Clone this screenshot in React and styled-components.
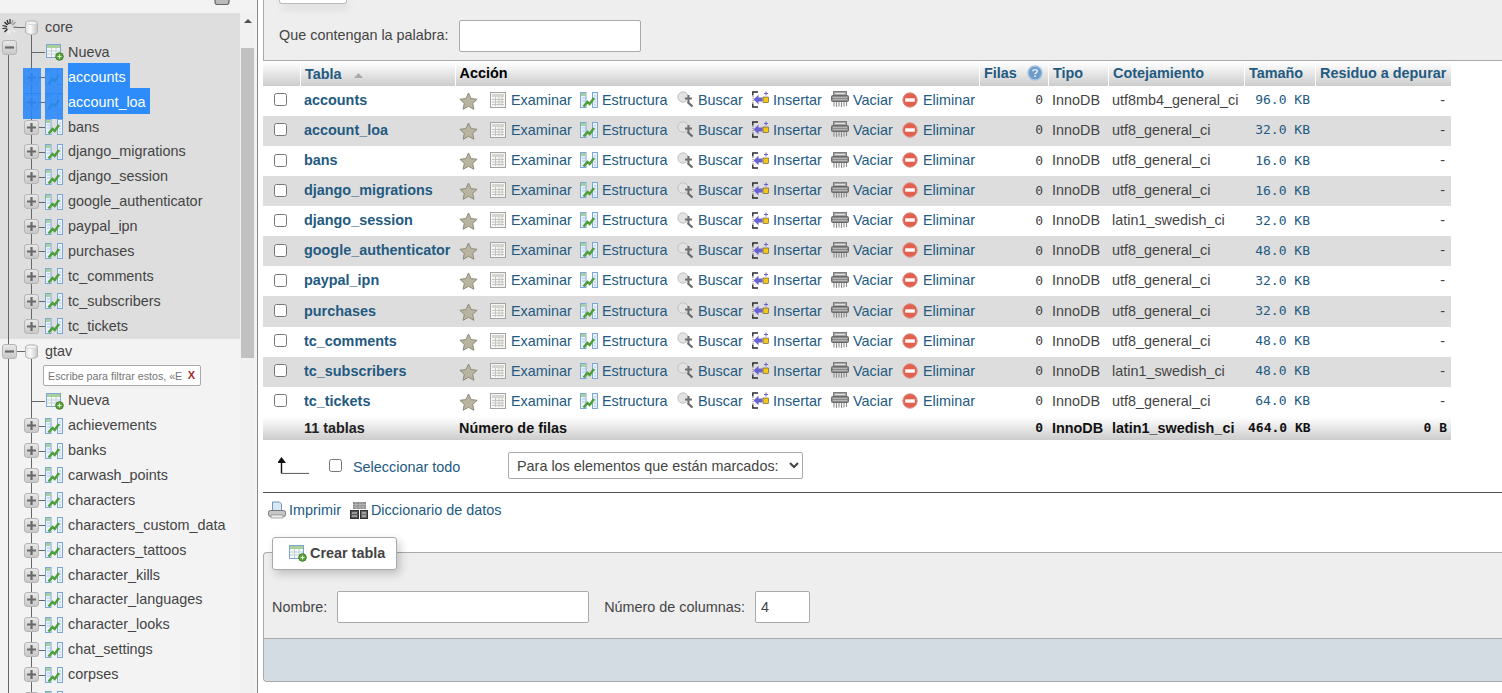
import React from 'react'
import styled, { createGlobalStyle } from 'styled-components'

const coreTables = ['accounts', 'account_loa', 'bans', 'django_migrations', 'django_session', 'google_authenticator', 'paypal_ipn', 'purchases', 'tc_comments', 'tc_subscribers', 'tc_tickets']
const gtavTables = ['achievements', 'banks', 'carwash_points', 'characters', 'characters_custom_data', 'characters_tattoos', 'character_kills', 'character_languages', 'character_looks', 'chat_settings', 'corpses', '']

const rows = [
  ['accounts', 'utf8mb4_general_ci', '96.0'],
  ['account_loa', 'utf8_general_ci', '32.0'],
  ['bans', 'utf8_general_ci', '16.0'],
  ['django_migrations', 'utf8_general_ci', '16.0'],
  ['django_session', 'latin1_swedish_ci', '32.0'],
  ['google_authenticator', 'utf8_general_ci', '48.0'],
  ['paypal_ipn', 'utf8_general_ci', '32.0'],
  ['purchases', 'utf8_general_ci', '32.0'],
  ['tc_comments', 'utf8_general_ci', '48.0'],
  ['tc_subscribers', 'latin1_swedish_ci', '48.0'],
  ['tc_tickets', 'utf8_general_ci', '64.0'],
]

const GlobalStyle = createGlobalStyle`
  html, body {
    margin: 0;
    height: 693px;
    overflow: hidden;
    background: #fff;
  }
  body {
    font-family: "Liberation Sans", Arial, sans-serif;
    font-size: 14.4px;
    color: #444;
  }
`

// icons
const StarIcon = () => (
  <svg width="19" height="18" viewBox="0 0 19 18">
    <path d="M9.5 1l2.6 5.6 6 .7-4.4 4.1 1.2 5.9-5.4-3-5.4 3 1.2-5.9L.9 7.3l6-.7z" fill="#b8b4a0" stroke="#8f8b78" strokeWidth="1" />
  </svg>
)

const BrowseIcon = () => (
  <svg width="16" height="16" viewBox="0 0 16 16">
    <rect x=".5" y=".5" width="15" height="15" fill="#f7f7f5" stroke="#a3a3a3" />
    <rect x="2" y="2" width="12" height="3" fill="#d5d5d0" />
    <path d="M2 7.5h12M2 10h12M2 12.5h12M5.5 5v9M9 5v9M12 5v9" stroke="#c4c4c0" strokeWidth="1" fill="none" />
  </svg>
)

const StructureIcon = () => (
  <svg width="18" height="18" viewBox="0 0 18 18">
    <rect x=".5" y="1.500" width="5.500" height="15" fill="#eaf2fb" stroke="#7ba6d8" />
    <rect x="12.500" y="1.500" width="5" height="15" fill="#eaf2fb" stroke="#7ba6d8" />
    <rect x="1" y="2" width="4.500" height="3" fill="#a7d19a" />
    <path d="M2 7h3M2 10h3M14 5h2M14 8h2M14 11h2M14 14h2" stroke="#a9c6e6" />
    <path d="M3.500 15.500L7.500 11l2.200 2L14 7" stroke="#4f9e3a" strokeWidth="2.500" fill="none" />
  </svg>
)

const SearchIcon = () => (
  <svg width="17" height="17" viewBox="0 0 17 17">
    <circle cx="6" cy="6" r="5.200" fill="#e2e2e2" stroke="#c2c2c2" />
    <path d="M10.500 11l5 4.500" stroke="#6a6a6a" strokeWidth="2.300" />
    <path d="M11.500 4v7M8 7.500h7" stroke="#6e6e6e" strokeWidth="2" />
  </svg>
)

const InsertIcon = () => (
  <svg width="17" height="17" viewBox="0 0 17 17">
    <path d="M6 1H.8v3.500M6 16H.8v-3.500" stroke="#2a2a2a" strokeWidth="1.400" fill="none" />
    <path d="M1 5v7" stroke="#777" strokeWidth="1" strokeDasharray="1 1" />
    <path d="M1.500 8.500L6.500 3.800v2.600h4v4.200h-4v2.600z" fill="#6a62d0" />
    <rect x="11" y="6" width="5.500" height="5.500" fill="#f5c518" stroke="#333" strokeWidth=".5" />
    <path d="M14 .5v4M12 2.500h4" stroke="#6a62d0" strokeWidth="1" />
  </svg>
)

const ShredderIcon = () => (
  <svg width="18" height="17" viewBox="0 0 18 17">
    <rect x="2.500" y=".5" width="13" height="4" fill="#a5a5a5" stroke="#7c7c7c" />
    <path d="M4 2.500h10" stroke="#e0e0e0" />
    <rect x=".5" y="4.500" width="17" height="6" rx="1" fill="#8a8a8a" stroke="#6a6a6a" />
    <path d="M2 6.500h14M2 8.500h14" stroke="#b5b5b5" />
    <path d="M3 11v4.500M5.500 11v5M8 11v4.500M10.500 11v5M13 11v4.500M15.500 11v4" stroke="#8c8c8c" strokeWidth="1.100" />
  </svg>
)

const DeleteIcon = () => (
  <svg width="16" height="16" viewBox="0 0 16 16">
    <circle cx="8" cy="8" r="7.200" fill="#e2604f" stroke="#d98f82" />
    <rect x="3.200" y="6.300" width="9.600" height="3.400" fill="#fff" />
  </svg>
)

const NewTableIcon = () => (
  <svg width="18" height="18" viewBox="0 0 18 18">
    <rect x=".5" y="1.500" width="14" height="13" fill="#f5f8f2" stroke="#7fa6cf" />
    <rect x="1" y="2" width="13" height="3" fill="#a9cf9a" />
    <path d="M1 8h13M1 11h13M5.500 5v9M10 5v9" stroke="#c2d2de" />
    <circle cx="13.500" cy="13.500" r="3.800" fill="#5ea33c" stroke="#3f7f2a" />
    <path d="M13.500 11.500v4M11.500 13.500h4" stroke="#dff0d2" />
  </svg>
)

const DbIcon = () => (
  <svg width="13" height="15" viewBox="0 0 13 15">
    <defs>
      <linearGradient id="dbFill" x1="0" x2="1" y1="0" y2="0">
        <stop offset="0" stopColor="#e0e0e0" />
        <stop offset=".4" stopColor="#fbfbfb" />
        <stop offset="1" stopColor="#c4c4c4" />
      </linearGradient>
    </defs>
    <path d="M.5 3c0-3 12-3 12 0v9c0 3.200-12 3.200-12 0z" fill="url(#dbFill)" stroke="#b5b5b5" />
    <ellipse cx="6.500" cy="3" rx="5.400" ry="1.600" fill="#f4f4f4" stroke="#c8c8c8" strokeWidth=".6" />
  </svg>
)

const Throbber = () => (
  <svg width="16" height="17" viewBox="0 0 16 17">
    <path d="M8 0v5M5 1l1.500 4.200M2.500 3l3 3M.5 6.500l4.500 1M.5 9.500L5 9M2.500 13l3-3" stroke="#222" strokeWidth="1.200" />
    <path d="M11 1L9.500 5.200M13.500 3l-3 3M15.500 8H11" stroke="#999" strokeWidth="1.200" />
    <path d="M8 16v-5M5.500 15.500L7 11M13 13l-3-2.500" stroke="#f0f0f0" strokeWidth="1.200" />
  </svg>
)

const PlusMark = () => (
  <svg width="11" height="11" viewBox="0 0 11 11">
    <path d="M5.500 1v9M1 5.500h9" stroke="#6a6a6a" strokeWidth="2.200" />
  </svg>
)

const MinusMark = () => (
  <svg width="11" height="11" viewBox="0 0 11 11">
    <path d="M1 5.500h9" stroke="#6a6a6a" strokeWidth="2.200" />
  </svg>
)

const HelpIcon = () => (
  <svg width="16" height="16" viewBox="0 0 16 16">
    <circle cx="8" cy="8" r="7" fill="#6d9cc9" stroke="#a7c4e0" strokeWidth="1.400" />
    <path d="M5.800 6.300c.2-2.300 4.500-2.300 4.500 0 0 1.500-2.300 1.500-2.300 3" stroke="#e8f1f8" strokeWidth="1.400" fill="none" />
    <rect x="7.200" y="10.400" width="1.600" height="1.600" fill="#e8f1f8" />
  </svg>
)

const SortArrow = () => (
  <svg width="9" height="5" viewBox="0 0 9 5">
    <path d="M4.500 0L9 5H0z" fill="#aaa" />
  </svg>
)

const UpArrow = () => (
  <svg width="32" height="17" viewBox="0 0 32 17">
    <path d="M3.500 16.500V5" stroke="#111" strokeWidth="1.400" />
    <path d="M3.500 0L8 6H-1z" fill="#111" />
    <path d="M3 16.500h28" stroke="#666" strokeWidth="1.200" />
  </svg>
)

const PrinterIcon = () => (
  <svg width="18" height="18" viewBox="0 0 18 18">
    <path d="M4.500 1h7l2 2v7h-9z" fill="#dbe7f5" stroke="#6f95c4" />
    <rect x=".5" y="9.500" width="17" height="6" rx="2" fill="#c6c6c6" stroke="#777" />
    <rect x="3" y="14" width="12" height="3" fill="#eee" stroke="#888" strokeWidth=".7" />
  </svg>
)

const DictIcon = () => (
  <svg width="18" height="18" viewBox="0 0 18 18">
    <rect x="3" y="1" width="13" height="7" fill="#8c8c8c" />
    <path d="M3 3.500h13M3 6h13M6 1v7M10 1v7M13 1v7" stroke="#c0c0c0" strokeWidth=".7" />
    <rect x=".5" y="9.500" width="8" height="8" fill="#555" stroke="#333" />
    <rect x="10.500" y="9.500" width="7" height="8" fill="#666" stroke="#333" />
    <path d="M2 12h5M2 15h5M12 12h4M12 15h4" stroke="#ddd" />
  </svg>
)

const GearStub = () => (
  <svg width="16" height="5" viewBox="0 0 16 5">
    <path d="M1 0v2c0 1.500 1 2.500 2.500 2.500h9C14 4.500 15 3.500 15 2V0" fill="#bbb" stroke="#666" strokeWidth="1.200" />
  </svg>
)

const actions = [
  { icon: <BrowseIcon />, label: 'Examinar', width: 90, gap: 5 },
  { icon: <StructureIcon />, label: 'Estructura', width: 97, gap: 4 },
  { icon: <SearchIcon />, label: 'Buscar', width: 75, gap: 4 },
  { icon: <InsertIcon />, label: 'Insertar', width: 79, gap: 4 },
  { icon: <ShredderIcon />, label: 'Vaciar', width: 71, gap: 4 },
  { icon: <DeleteIcon />, label: 'Eliminar', width: 77, gap: 5 },
]

const TableRow = ({ selected, trunk, name }) => (
  <TreeRow>
    <Guide $line="full" />
    <Branch $trunk={trunk} $stub>
      <Expander><PlusMark /></Expander>
      {selected && <SelectOverlay />}
    </Branch>
    <IconSlot>
      <StructureIcon />
      {selected && <SelectOverlay />}
    </IconSlot>
    <TreeLabel $selected={selected}>{name}</TreeLabel>
  </TreeRow>
)

const App = () => (
  <Page>
    <GlobalStyle />
    <Sidebar>
      <TreeColumn>
        <TopBar><GearStub /></TopBar>
        <CoreSection>
          <TreeRow>
            <Guide $stub><Throbber /></Guide>
            <Branch $trunk="below"><DbSlot><DbIcon /></DbSlot></Branch>
            <TreeLabel>core</TreeLabel>
          </TreeRow>
          <TreeRow>
            <Guide $line="below" $top><Expander><MinusMark /></Expander></Guide>
            <Branch $trunk="full" $stub />
            <NewSlot><NewTableIcon /></NewSlot>
            <TreeLabel>Nueva</TreeLabel>
          </TreeRow>
          {coreTables.map((name, i) => (
            <TableRow key={name} name={name} selected={i < 2} trunk={i === coreTables.length - 1 ? 'half' : 'full'} />
          ))}
        </CoreSection>
        <TreeRow>
          <Guide $line="full" $stub><Expander><MinusMark /></Expander></Guide>
          <Branch $trunk="below"><DbSlot><DbIcon /></DbSlot></Branch>
          <TreeLabel>gtav</TreeLabel>
        </TreeRow>
        <TreeRow>
          <Guide $line="full" />
          <Branch $trunk="full" />
          <FilterBox>
            <FilterInput placeholder="Escribe para filtrar estos, «Enter» para buscar todos" />
            <FilterClear>X</FilterClear>
          </FilterBox>
        </TreeRow>
        <TreeRow>
          <Guide $line="full" />
          <Branch $trunk="full" $stub />
          <NewSlot><NewTableIcon /></NewSlot>
          <TreeLabel>Nueva</TreeLabel>
        </TreeRow>
        {gtavTables.map((name, i) => <TableRow key={i} name={name} trunk="full" />)}
      </TreeColumn>
      <ScrollTrack>
        <ScrollArrow />
        <ScrollThumb />
      </ScrollTrack>
    </Sidebar>

    <Main>
      <FilterPanel>
        <PanelStub />
        <FilterLine>
          <FilterText>Que contengan la palabra:</FilterText>
          <WordInput />
        </FilterLine>
      </FilterPanel>

      <DataTable>
        <colgroup>
          <col width="37" /><col width="155" /><col width="524" /><col width="69" /><col width="60" /><col width="136" /><col width="71" /><col width="136" />
        </colgroup>
        <thead>
          <tr>
            <HeadCell />
            <HeadCell><HeadLink>Tabla</HeadLink><SortSlot><SortArrow /></SortSlot></HeadCell>
            <HeadCell $dark>Acción</HeadCell>
            <HeadCell><HeadFlex><HeadLink>Filas</HeadLink><HelpIcon /></HeadFlex></HeadCell>
            <HeadCell><HeadLink>Tipo</HeadLink></HeadCell>
            <HeadCell><HeadLink>Cotejamiento</HeadLink></HeadCell>
            <HeadCell><HeadLink>Tamaño</HeadLink></HeadCell>
            <HeadCell><HeadLink>Residuo a depurar</HeadLink></HeadCell>
          </tr>
        </thead>
        <tbody>
          {rows.map(([name, collation, size]) => (
            <BodyRow key={name}>
              <CheckCell><Check type="checkbox" /></CheckCell>
              <NameCell>{name}</NameCell>
              <td>
                <ActionBar>
                  <StarSlot><StarIcon /></StarSlot>
                  {actions.map(a => (
                    <ActionLink key={a.label} $width={a.width} $gap={a.gap}>
                      {a.icon}
                      <span>{a.label}</span>
                    </ActionLink>
                  ))}
                </ActionBar>
              </td>
              <MonoCell>0</MonoCell>
              <PlainCell>InnoDB</PlainCell>
              <PlainCell>{collation}</PlainCell>
              <SizeCell>{size} KB</SizeCell>
              <DashCell>-</DashCell>
            </BodyRow>
          ))}
        </tbody>
        <tfoot>
          <tr>
            <FootCell />
            <FootCell>11 tablas</FootCell>
            <FootCell>Número de filas</FootCell>
            <FootCell $mono $align="right" $right={5}>0</FootCell>
            <FootCell>InnoDB</FootCell>
            <FootCell>latin1_swedish_ci</FootCell>
            <FootCell $mono $align="right" $right={5}>464.0 KB</FootCell>
            <FootCell $mono $align="right" $right={4}>0 B</FootCell>
          </tr>
        </tfoot>
      </DataTable>

      <SelectBar>
        <UpArrow />
        <Check type="checkbox" />
        <SelectAll>Seleccionar todo</SelectAll>
        <BulkSelect defaultValue="marked">
          <option value="marked">Para los elementos que están marcados:</option>
        </BulkSelect>
      </SelectBar>

      <PrintLinks>
        <PrintLink><PrinterIcon />Imprimir</PrintLink>
        <PrintLink><DictIcon />Diccionario de datos</PrintLink>
      </PrintLinks>

      <CreatePanel>
        <CreateButton><NewTableIcon />Crear tabla</CreateButton>
        <CreateFields>
          <span>Nombre:</span>
          <NameInput />
          <ColumnsLabel>Número de columnas:</ColumnsLabel>
          <ColumnsInput defaultValue="4" />
        </CreateFields>
        <CreateFooter />
      </CreatePanel>
    </Main>
  </Page>
)

export default App

const Page = styled.div`
  display: flex;
  height: 693px;
  overflow: hidden;
`

const Sidebar = styled.aside`
  flex: 0 0 258px;
  display: flex;
  height: 693px;
  overflow: hidden;
  background: #f3f3f3;
  border-right: 1px solid #888;
  box-sizing: border-box;
`

const TreeColumn = styled.div`
  flex: 0 0 240px;
  min-width: 0;
  overflow: hidden;
`

const TopBar = styled.div`
  height: 13px;
  display: flex;
  justify-content: flex-end;
  padding-right: 10px;
  overflow: hidden;
`

const CoreSection = styled.div`
  background: #dedede;
  padding-top: 2px;
`

const TreeRow = styled.div`
  display: flex;
  align-items: center;
  height: 24.9px;
  position: relative;
`

const Guide = styled.div`
  position: relative;
  flex: 0 0 23px;
  height: 100%;
  display: flex;
  align-items: ${p => (p.$top ? 'flex-start' : 'center')};
  padding-left: 2px;
  box-sizing: border-box;
  &::before {
    content: '';
    display: ${p => (p.$line ? 'block' : 'none')};
    position: absolute;
    left: 8px;
    width: 1px;
    top: ${p => (p.$line === 'below' ? '12px' : '0')};
    bottom: 0;
    background: #666;
  }
  &::after {
    content: '';
    display: ${p => (p.$stub ? 'block' : 'none')};
    position: absolute;
    left: 14px;
    right: -3px;
    top: 50%;
    height: 1px;
    background: #666;
  }
  & > svg {
    position: relative;
    z-index: 1;
  }
`

const Branch = styled.div`
  position: relative;
  flex: 0 0 22px;
  height: 100%;
  display: flex;
  align-items: center;
  padding-left: 1px;
  box-sizing: border-box;
  &::before {
    content: '';
    display: ${p => (p.$trunk ? 'block' : 'none')};
    position: absolute;
    left: 8px;
    width: 1px;
    top: ${p => (p.$trunk === 'below' ? '20px' : '0')};
    bottom: ${p => (p.$trunk === 'half' ? '50%' : '0')};
    background: #666;
  }
  &::after {
    content: '';
    display: ${p => (p.$stub ? 'block' : 'none')};
    position: absolute;
    left: 8px;
    right: 0;
    top: 50%;
    height: 1px;
    background: #666;
  }
`

const DbSlot = styled.span`
  position: relative;
  z-index: 1;
  display: flex;
  margin-left: 1px;
`

const Expander = styled.span`
  position: relative;
  z-index: 1;
  width: 15px;
  height: 15px;
  flex: none;
  display: flex;
  align-items: center;
  justify-content: center;
  box-sizing: border-box;
  border: 1px solid #b5b5b5;
  border-radius: 3px;
  background: linear-gradient(#e8e8e8, #c9c9c9);
`

const IconSlot = styled.div`
  position: relative;
  flex: 0 0 18px;
  height: 100%;
  display: flex;
  align-items: center;
  margin-right: 5px;
`

const NewSlot = styled(IconSlot)`
  margin-left: 1px;
  margin-right: 4px;
`

const SelectOverlay = styled.span`
  position: absolute;
  z-index: 2;
  left: 0;
  top: 3px;
  width: 18px;
  height: 26px;
  background: rgba(40, 135, 250, 0.88);
`

const TreeLabel = styled.span`
  position: relative;
  z-index: 3;
  font-size: 14.4px;
  white-space: nowrap;
  color: ${p => (p.$selected ? '#fff' : '#444')};
  background: ${p => (p.$selected ? '#2d8cfa' : 'transparent')};
  padding: ${p => (p.$selected ? '3px 4px 0 0' : '0')};
  margin-top: ${p => (p.$selected ? '-2px' : '0')};
  line-height: 23px;
`

const FilterBox = styled.div`
  position: relative;
  margin-left: -2px;
  width: 158px;
  height: 21px;
`

const FilterInput = styled.input`
  box-sizing: border-box;
  width: 100%;
  height: 100%;
  padding: 0 18px 0 4px;
  border: 1px solid #aaa;
  border-radius: 2px;
  background: #fff;
  font: 10.7px "Liberation Sans", sans-serif;
  &::placeholder {
    color: #757575;
  }
`

const FilterClear = styled.span`
  position: absolute;
  right: 6px;
  top: 4px;
  color: #a82a2a;
  font: bold 11px/13px "Liberation Sans", sans-serif;
`

const ScrollTrack = styled.div`
  flex: 0 0 15px;
  background: #f1f1f1;
  margin-top: 13px;
  display: flex;
  flex-direction: column;
  align-items: center;
`

const ScrollArrow = styled.div`
  width: 0;
  height: 0;
  margin-top: 6px;
  border: 4px solid transparent;
  border-top: 0;
  border-bottom: 4px solid #505050;
`

const ScrollThumb = styled.div`
  width: 13px;
  height: 310px;
  margin-top: 25px;
  background: #c1c1c1;
`

const Main = styled.main`
  flex: 1;
  min-width: 0;
  margin-left: 5px;
`

const FilterPanel = styled.div`
  height: 61px;
  box-sizing: border-box;
  background: #eee;
  border-left: 1px solid #aaa;
  border-bottom: 1px solid #aaa;
  padding-left: 15px;
`

const PanelStub = styled.div`
  width: 68px;
  height: 4px;
  box-sizing: border-box;
  background: #fff;
  border: 1px solid #bbb;
  border-top: 0;
  border-radius: 0 0 3px 3px;
  box-shadow: 2px 4px 8px rgba(0, 0, 0, 0.12);
`

const FilterLine = styled.div`
  display: flex;
  align-items: center;
  gap: 10px;
  margin-top: 16px;
  color: #444;
`

const FilterText = styled.span`
  padding-bottom: 2px;
`

const WordInput = styled.input`
  box-sizing: border-box;
  width: 182px;
  height: 32px;
  border: 1px solid #aaa;
  border-radius: 2px;
  background: #fff;
`

const DataTable = styled.table`
  width: 1188px;
  margin-top: 0.8px;
  table-layout: fixed;
  border-collapse: collapse;
  border-spacing: 0;
`

const HeadCell = styled.th`
  height: 24px;
  padding: 0 0 1px ${p => (p.$dark ? '4px' : '4.5px')};
  box-sizing: border-box;
  text-align: left;
  white-space: nowrap;
  background: linear-gradient(#fff, #ccc);
  border-right: 1px solid #fff;
  font-size: 14.4px;
  font-weight: bold;
  color: ${p => (p.$dark ? '#000' : '#235a81')};
`

const HeadLink = styled.span`
  color: #235a81;
`

const HeadFlex = styled.span`
  display: flex;
  align-items: center;
  gap: 10px;
`

const SortSlot = styled.span`
  display: inline-block;
  margin-left: 12px;
  vertical-align: 1px;
`

const BodyRow = styled.tr`
  height: 30.1px;
  background: #fff;
  &:nth-child(even) {
    background: #ddd;
  }
  & > td {
    padding: 0 0 2px;
  }
`

const CheckCell = styled.td`
  & > input {
    display: block;
    margin: 0 auto 0 11px;
  }
`

const Check = styled.input`
  width: 13px;
  height: 13px;
  margin: 0;
`

const NameCell = styled.td`
  &&& {
    padding-left: 4px;
  }
  color: #235a81;
  font-weight: bold;
  white-space: nowrap;
`

const ActionBar = styled.div`
  display: flex;
  align-items: center;
  padding-left: 4px;
  white-space: nowrap;
`

const StarSlot = styled.span`
  flex: 0 0 31px;
  display: flex;
  margin-top: 2px;
`

const ActionLink = styled.span`
  flex: 0 0 ${p => p.$width}px;
  display: flex;
  align-items: center;
  gap: ${p => p.$gap}px;
  color: #235a81;
`

const MonoCell = styled.td`
  &&& {
    padding-right: 5px;
  }
  text-align: right;
  font: 13px "DejaVu Sans Mono", monospace;
  color: #444;
`

const PlainCell = styled.td`
  &&& {
    padding-left: 4px;
  }
  white-space: nowrap;
  color: #444;
`

const SizeCell = styled(MonoCell)`
  color: #235a81;
`

const DashCell = styled.td`
  &&& {
    padding-right: 6px;
  }
  text-align: right;
  color: #444;
`

const FootCell = styled.td`
  height: 23.1px;
  padding: 0 ${p => p.$right || 0}px 1px 4px;
  box-sizing: border-box;
  background: linear-gradient(#fff, #ccc);
  white-space: nowrap;
  font-weight: bold;
  color: #111;
  text-align: ${p => p.$align || 'left'};
  font-family: ${p => (p.$mono ? '"DejaVu Sans Mono", monospace' : 'inherit')};
  font-size: ${p => (p.$mono ? '13px' : '14.4px')};
  &:nth-child(2) {
    color: #222;
  }
`

const SelectBar = styled.div`
  height: 53px;
  display: flex;
  align-items: center;
  padding-left: 15px;
  box-sizing: border-box;
  border-bottom: 1px solid #555;
  & > svg {
    margin-right: 19px;
    margin-top: -1px;
  }
`

const SelectAll = styled.span`
  margin-left: 11px;
  padding-top: 2px;
  width: 155px;
  color: #235a81;
`

const BulkSelect = styled.select`
  width: 295px;
  height: 27px;
  padding: 0 4px;
  background: #fff;
  border: 1px solid #aaa;
  border-radius: 2px;
  font: 14.4px "Liberation Sans", sans-serif;
  color: #444;
`

const PrintLinks = styled.div`
  display: flex;
  gap: 9px;
  padding: 7px 0 0 5px;
  height: 35px;
  box-sizing: border-box;
`

const PrintLink = styled.span`
  display: flex;
  align-items: center;
  gap: 3px;
  height: 20px;
  color: #235a81;
`

const CreatePanel = styled.section`
  margin-top: 24px;
  background: #eee;
  border-top: 1px solid #aaa;
  border-left: 1px solid #aaa;
  border-bottom: 1px solid #aaa;
  border-bottom-left-radius: 4px;
  border-top-left-radius: 4px;
`

const CreateButton = styled.div`
  display: flex;
  align-items: center;
  gap: 3px;
  box-sizing: border-box;
  width: 125px;
  height: 33px;
  margin: -16px 0 0 8px;
  padding-left: 16px;
  background: #fff;
  border: 1px solid #aaa;
  border-radius: 3px;
  box-shadow: 3px 4px 10px rgba(0, 0, 0, 0.2);
  font-weight: bold;
  color: #444;
`

const CreateFields = styled.div`
  display: flex;
  align-items: center;
  box-sizing: border-box;
  height: 68px;
  padding: 6px 0 0 8px;
  color: #444;
`

const NameInput = styled.input`
  box-sizing: border-box;
  width: 252px;
  height: 32px;
  margin-left: 10px;
  border: 1px solid #aaa;
  border-radius: 2px;
  background: #fff;
`

const ColumnsLabel = styled.span`
  margin-left: 15px;
`

const ColumnsInput = styled.input`
  box-sizing: border-box;
  width: 55px;
  height: 32px;
  margin-left: 10px;
  padding: 0 5px;
  border: 1px solid #aaa;
  border-radius: 2px;
  background: #fff;
  font: 14.4px "Liberation Sans", sans-serif;
  color: #444;
`

const CreateFooter = styled.div`
  height: 42px;
  background: #d3dce3;
  border-top: 1px solid #aaa;
  border-bottom-left-radius: 4px;
`
